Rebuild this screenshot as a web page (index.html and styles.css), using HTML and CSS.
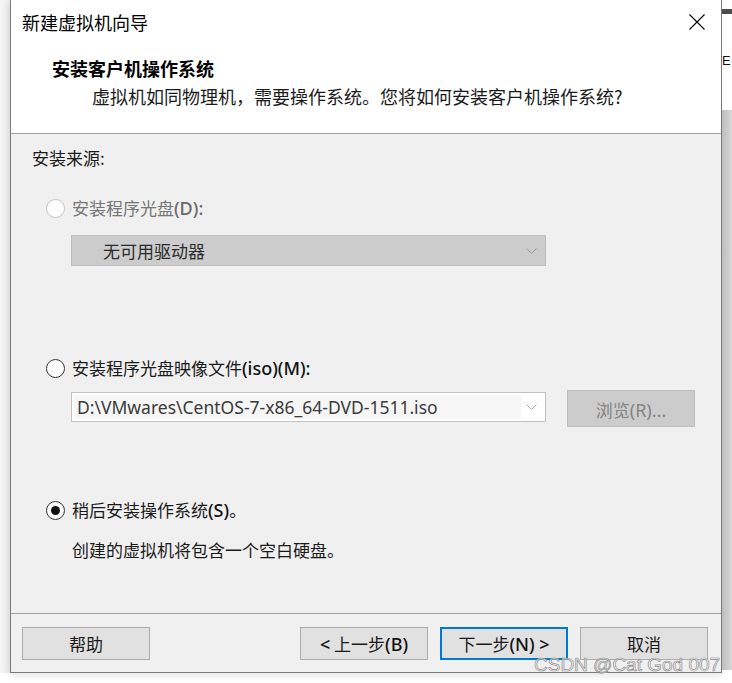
FILE: index.html
```html
<!DOCTYPE html>
<html lang="zh-CN">
<head>
<meta charset="utf-8">
<title>新建虚拟机向导</title>
<link rel="stylesheet" href="styles.css">
</head>
<body>
<div class="screen">
    <div class="gutter"></div>

    <div class="dialog">
        <div class="titlebar">
            <span class="title">新建虚拟机向导</span>
            <svg class="close" width="16" height="16" viewBox="0 0 16 16">
                <path d="M0.5 0.5 L15.5 15.5 M15.5 0.5 L0.5 15.5" stroke="#000" stroke-width="1.1" fill="none"/>
            </svg>
        </div>

        <div class="header">
            <h1>安装客户机操作系统</h1>
            <p>虚拟机如同物理机，需要操作系统。您将如何安装客户机操作系统?</p>
        </div>

        <div class="content">
            <div class="section-label">安装来源:</div>

            <div class="option disabled first">
                <span class="radio"></span>安装程序光盘<span class="latin">(D):</span>
            </div>
            <div class="combo combo-off">
                <span class="combo-text">无可用驱动器</span>
                <svg class="chevron" width="11" height="6" viewBox="0 0 11 6">
                    <path d="M0.5 0.5 L5.5 5.5 L10.5 0.5" stroke="#9a9a9a" fill="none"/>
                </svg>
            </div>

            <div class="option second">
                <span class="radio"></span>安装程序光盘映像文件<span class="latin">(iso)(M):</span>
            </div>
            <div class="iso-row">
                <div class="combo combo-on">
                    <span class="combo-field">D:\VMwares\CentOS-7-x86_64-DVD-1511.iso</span>
                    <svg class="chevron" width="11" height="6" viewBox="0 0 11 6">
                        <path d="M0.5 0.5 L5.5 5.5 L10.5 0.5" stroke="#a8a8a8" fill="none"/>
                    </svg>
                </div>
                <div class="browse">浏览<span class="latin">(R)...</span></div>
            </div>

            <div class="option third">
                <span class="radio checked"></span>稍后安装操作系统<span class="latin">(S)</span>。
            </div>
            <div class="desc">创建的虚拟机将包含一个空白硬盘。</div>
        </div>

        <div class="footer">
            <button class="btn">帮助</button>
            <div class="nav">
                <button class="btn"><span class="latin">&lt;</span> 上一步<span class="latin">(B)</span></button>
                <button class="btn primary">下一步<span class="latin">(N) &gt;</span></button>
                <button class="btn">取消</button>
            </div>
        </div>
    </div>

    <div class="strip">
        <div class="strip-bar"></div>
        <div class="strip-text">E</div>
        <div class="strip-shade"></div>
    </div>
</div>

<div class="watermark">CSDN @Cat God 007</div>
</body>
</html>
```

FILE: styles.css
```css
body {
    margin: 0;
    background: #fff;
    font-family: "Noto Sans CJK SC", sans-serif;
    color: #1a1a1a;
    overflow: hidden;
}

.latin {
    font-family: "Noto Sans", "Noto Sans CJK SC", sans-serif;
    font-size: 18px;
    font-weight: 500;
    color: #111;
}
.disabled .latin { color: #6a6a6a; }
.browse .latin { color: #848484; font-weight: 400; }

.screen {
    display: flex;
    width: 732px;
    height: 683px;
    position: relative;
}

.gutter {
    width: 10px;
    height: 673px;
    background: linear-gradient(to right, #f6f6f6, #ececec);
}

.dialog {
    width: 712px;
    height: 673px;
    box-sizing: border-box;
    border: 1px solid #7a7a7a;
    border-top: none;
    display: flex;
    flex-direction: column;
    background: #fff;
    box-shadow: 0 2px 8px rgba(0, 0, 0, 0.12);
}

/* title bar */
.titlebar {
    height: 44px;
    display: flex;
    align-items: center;
    justify-content: space-between;
    padding: 0 16px 0 11px;
}
.title {
    font-size: 18px;
    line-height: 24px;
    color: #000;
}
.close { margin-top: -1px; }

/* header */
.header {
    height: 89px;
    border-bottom: 1px solid #a0a0a0;
    padding-left: 41px;
}
.header h1 {
    margin: 12px 0 0;
    font-size: 18px;
    line-height: 24px;
    font-weight: bold;
    color: #000;
}
.header p {
    margin: 4px 0 0 40px;
    font-size: 18px;
    line-height: 24px;
    color: #1a1a1a;
}

/* content */
.content {
    flex: 1;
    background: #f0f0f0;
    padding-left: 21px;
    font-size: 17px;
}

.section-label {
    margin-top: 12px;
    line-height: 24px;
}

.option {
    display: flex;
    align-items: center;
    line-height: 24px;
    height: 24px;
    padding-left: 14px;
}
.option.first  { margin-top: 26px; }
.option.second { margin-top: 90px; }
.option.third  { margin-top: 71px; }
.option.disabled { color: #767676; }

.radio {
    width: 19px;
    height: 19px;
    box-sizing: border-box;
    border: 1px solid #333;
    border-radius: 50%;
    background: #fff;
    margin-right: 7px;
    display: flex;
    align-items: center;
    justify-content: center;
}
.disabled .radio { border-color: #c4c4c4; }
.radio.checked::after {
    content: "";
    width: 9px;
    height: 9px;
    border-radius: 50%;
    background: #111;
}

.combo {
    width: 475px;
    box-sizing: border-box;
    display: flex;
    align-items: center;
    justify-content: space-between;
    padding-right: 8px;
}
.combo-off {
    margin: 15px 0 0 39px;
    height: 31px;
    background: #cccccc;
    border: 1px solid #bdbdbd;
    padding-left: 31px;
    color: #2a2a2a;
}
.combo-text { line-height: 24px; }

.iso-row {
    display: flex;
    align-items: flex-start;
    margin: 10px 0 0 39px;
}
.combo-on {
    margin-top: 2px;
    height: 30px;
    background: #fff;
    border: 1px solid #c2c2c2;
    padding: 2px 8px 2px 2px;
}
.combo-field {
    flex: 0 0 444px;
    height: 100%;
    background: #f6f6f6;
    padding-left: 3px;
    font-family: "Noto Sans", sans-serif;
    font-size: 17.5px;
    line-height: 24px;
    color: #3a3a3a;
    white-space: nowrap;
}

.browse {
    margin-left: 21px;
    width: 128px;
    height: 37px;
    box-sizing: border-box;
    background: #cccccc;
    border: 1px solid #bdbdbd;
    color: #848484;
    display: flex;
    align-items: center;
    justify-content: center;
    padding-top: 2px;
}

.desc {
    margin-top: 16px;
    padding-left: 40px;
    line-height: 24px;
}

/* footer */
.footer {
    border-top: 1px solid #a0a0a0;
    background: #f0f0f0;
    padding: 13px 13px 12px 11px;
    display: flex;
    justify-content: space-between;
}
.nav {
    display: flex;
    gap: 12px;
}
.btn {
    width: 128px;
    height: 33px;
    box-sizing: border-box;
    background: #e1e1e1;
    border: 1px solid #adadad;
    font-family: "Noto Sans CJK SC", sans-serif;
    font-size: 17px;
    color: #1a1a1a;
    padding: 0;
}
.btn.primary { border: 2px solid #0078d7; }

/* the window behind */
.strip {
    width: 10px;
    height: 683px;
    overflow: hidden;
    background: #fff;
}
.strip-bar {
    margin-top: 9px;
    height: 5px;
    background: #4c4c4c;
}
.strip-text {
    margin-top: 36px;
    margin-left: 0;
    font-family: "Liberation Sans", sans-serif;
    font-size: 13px;
    line-height: 22px;
    color: #111;
}
.strip-shade {
    margin-top: 38px;
    height: 560px;
    background: linear-gradient(to right, #bdbdbd, #d8d8d8);
}

.watermark {
    position: absolute;
    left: 534px;
    top: 654px;
    font-family: "Liberation Sans", sans-serif;
    font-size: 19px;
    line-height: 22px;
    color: rgba(250, 250, 250, 0.7);
    -webkit-text-stroke: 0.7px #8e8e8e;
    white-space: nowrap;
}
```
